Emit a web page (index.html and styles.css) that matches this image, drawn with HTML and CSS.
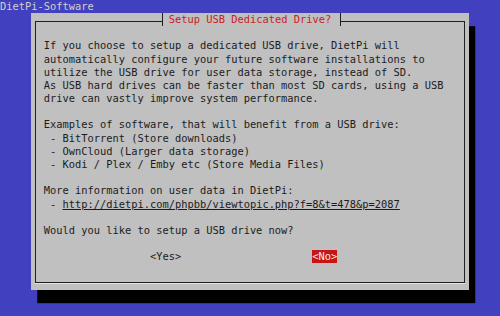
FILE: index.html
```html
<!DOCTYPE html>
<html lang="en">
<head>
    <meta charset="UTF-8">
    <title>DietPi-Software</title>
    <link rel="stylesheet" href="styles.css">
</head>
<body>

    <div class="screen">
        <div class="backtitle">DietPi-Software</div>

        <div class="dialog">
            <div class="frame">
<pre class="msg">If you choose to setup a dedicated USB drive, DietPi will
automatically configure your future software installations to
utilize the USB drive for user data storage, instead of SD.
As USB hard drives can be faster than most SD cards, using a USB
drive can vastly improve system performance.

Examples of software, that will benefit from a USB drive:
 - BitTorrent (Store downloads)
 - OwnCloud (Larger data storage)
 - Kodi / Plex / Emby etc (Store Media Files)

More information on user data in DietPi:
 - <span class="link">http://dietpi.com/phpbb/viewtopic.php?f=8&amp;t=478&amp;p=2087</span>

Would you like to setup a USB drive now?

                 <span class="btn">&lt;Yes&gt;</span>                     <span class="btn btn-active">&lt;No&gt;</span></pre>
            </div>
            <!-- title sits over the top frame line -->
            <div class="title"> Setup USB Dedicated Drive? </div>
        </div>
    </div>

</body>
</html>
```

FILE: styles.css
```css
/* 80x24 terminal: one cell is 6.25 x 13.1667px */
body {
    margin: 0;
    font-family: 'DejaVu Sans Mono', 'Liberation Mono', monospace;
    font-size: 10.38px;
    line-height: 13.1667px;
}

.screen {
    width: 500px;
    height: 316px;
    background-color: #4141bf;
    overflow: hidden;
}

.backtitle {
    height: 13.1667px;
    color: #cfcfcf;
    white-space: pre;
}

/* Dialog window, cols 5-74, rows 1-21 */
.dialog {
    position: relative;
    margin-left: 31.25px;
    width: 437.5px;
    height: 276.5px;
    padding: 7.8px 3.75px 6.7px;
    box-sizing: border-box;
    background-color: #c0c0c0;
    box-shadow: 6.25px 13.1667px 0 0 #000; /* one cell offset */
}

.frame {
    height: 100%;
    box-sizing: border-box;
    border: 1px solid #202020;
    box-shadow: 0 1px 0 0 #e4e4e4;
}

.msg {
    margin: 0;
    padding: 17.5px 0 0 7.75px;
    font: inherit;
    color: #1c1c1c;
}

.link {
    text-decoration: underline;
}

.btn {
    display: inline-block;
    vertical-align: top;
    height: 13.1667px;
}

.btn-active {
    background-color: #c81414;
    color: #ececec;
}

.title {
    position: absolute;
    top: 0;
    left: 130.25px;
    height: 13.1667px;
    padding-right: 2.5px;
    border-left: 1px solid #202020;
    border-right: 1px solid #202020;
    background-color: #c0c0c0;
    color: #c82020;
    white-space: pre;
}
```
